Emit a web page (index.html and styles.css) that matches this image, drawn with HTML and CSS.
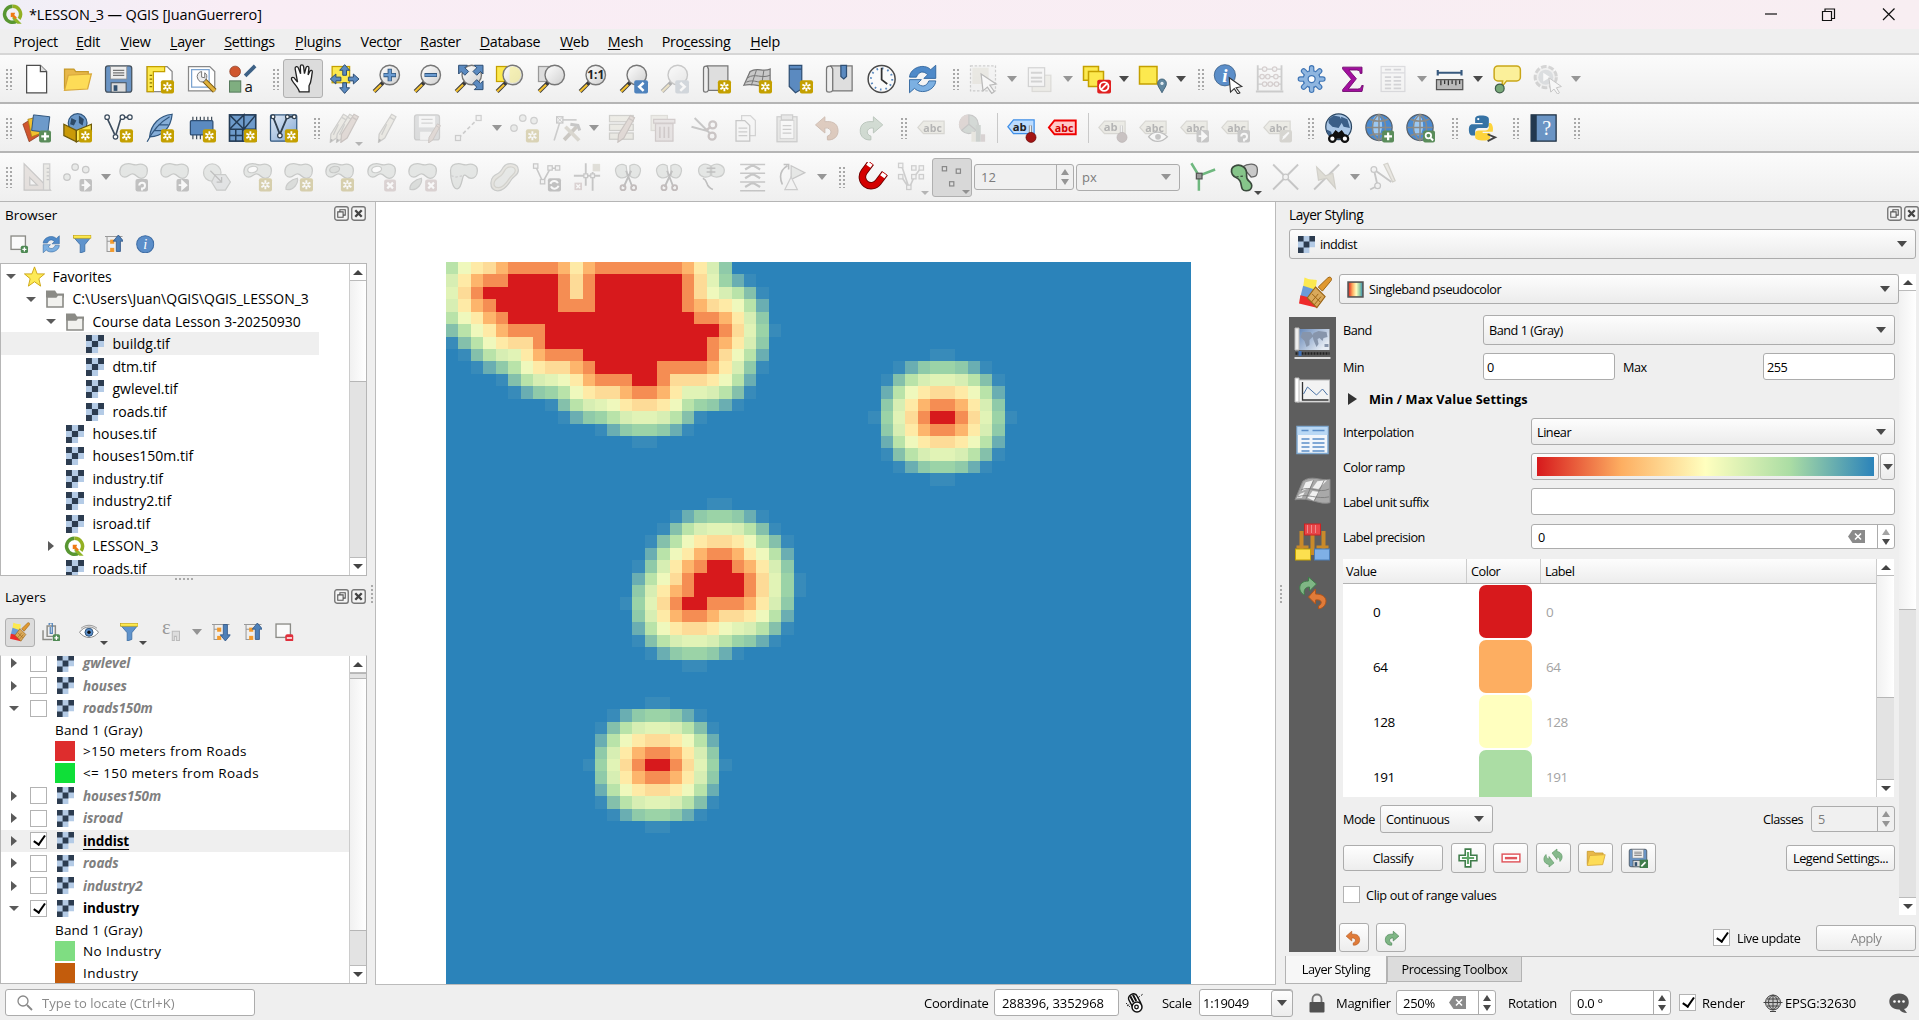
FILE: index.html
```html
<!DOCTYPE html>
<html lang="en">
<head>
<meta charset="utf-8">
<title>*LESSON_3 — QGIS [JuanGuerrero]</title>
<link rel="stylesheet" href="styles.css">
</head>
<body>
<svg class="sprite" aria-hidden="true">
<defs>
<linearGradient id="gl" x1="0" y1="0" x2="1" y2="1"><stop offset="0" stop-color="#fff"/><stop offset="1" stop-color="#cfcfcf"/></linearGradient>
<linearGradient id="spec"><stop offset="0" stop-color="#d7191c"/><stop offset=".3" stop-color="#fdae61"/><stop offset=".55" stop-color="#ffffbf"/><stop offset=".8" stop-color="#8cc7a0"/><stop offset="1" stop-color="#2b83ba"/></linearGradient>
<linearGradient id="sea" x1="0" y1="0" x2="1" y2=".6"><stop offset="0" stop-color="#5f82b4"/><stop offset="1" stop-color="#e6ecf4"/></linearGradient>
<linearGradient id="vg" x1="0" y1="0" x2="1" y2="1"><stop offset="0" stop-color="#e3ebf5"/><stop offset="1" stop-color="#7fa6d3"/></linearGradient>
<g id="bn"><rect x="13" y="13" width="10.5" height="10.5" rx="1.6" fill="#c4a000"/><path d="M18.2 14.6v7.2M15 16.4l6.4 3.7M21.4 16.4L15 20.1" stroke="#fff" stroke-width="1.5"/><circle cx="18.2" cy="18.2" r="1" fill="#c4a000"/></g>
<g id="bp"><rect x="14" y="14" width="9.5" height="9.5" rx="1.6" fill="#5a8c5a"/><path d="M18.8 15.6v6.2M15.7 18.7h6.2" stroke="#fff" stroke-width="1.8"/></g>
<g id="bx"><rect x="14" y="14" width="9.5" height="9.5" rx="1.6" fill="#c9a2a2"/><path d="M16.5 16.5l4.6 4.6M21.1 16.5l-4.6 4.6" stroke="#fff" stroke-width="1.7"/></g>
<g id="ba"><rect x="13.5" y="13.5" width="10" height="10" rx="1.6" fill="#7d7d7d"/><path d="M15.2 18.5h5M18 15.4l3.4 3.1-3.4 3.1z" stroke="#fff" stroke-width="1.5" fill="#fff"/></g>
<g id="br"><rect x="13.5" y="13.5" width="10" height="10" rx="1.6" fill="#7d7d7d"/><path d="M16.500 18.800a2.300 2.300 0 1 1 2.200 2.400v1.600" stroke="#fff" stroke-width="1.600" fill="none"/></g>
<g id="mag"><path d="M9.5 14.5L2 22" stroke="#3a3a3a" stroke-width="3.2"/><path d="M7.6 16.6L2 22" stroke="#f3c130" stroke-width="1.8"/><circle cx="14.5" cy="8.8" r="7.8" fill="url(#gl)" stroke="#777" stroke-width="1.1"/></g>
<g id="blob"><path d="M1 7.500C1 3 4 1.300 8 1.300c3 0 4 1.500 7 .8 4-1 8 .4 8 4.400 0 4.500-2.500 6.500-5 6.500-3.500 0-3.500-3-6.500-3.500-2.500-.5-3.500 2.500-6.500 2.500-2.500 0-4-2-4-4.500z" fill="#c9d2ca" stroke="#858c86"/></g>
<g id="tag"><path d="M5.500 6.500H22v10H5.500L1 11.500z" fill="#ddd9ba" stroke="#a9a68e"/></g>
<g id="pencil"><path d="M16 1l3.500 2L10.500 20l-5 3.500L6 17z" fill="#dcd4b8" stroke="#8d8a80"/><path d="M14.700 3.500l3.500 2M12 9l-4 8.500" fill="none" stroke="#8d8a80"/><path d="M6 20.500l1.700 1-2.200 2z" fill="#555"/></g>
<g id="rpencil"><path d="M16 1l3.500 2L10.500 20l-5 3.500L6 17z" fill="#cfa893" stroke="#8f6f62"/><path d="M14.700 3.500l3.500 2" fill="none" stroke="#8f6f62"/></g>
<g id="globe"><circle cx="11.500" cy="11.500" r="10.500" fill="#4a8ad0" stroke="#58616b"/><ellipse cx="10" cy="10" rx="4" ry="8" fill="#9cc8f2"/><path d="M4 5c4 2 11 2 15 0M1.500 11.500h20M4 18c4-2 11-2 15 0M11.500 1v21M11.500 1c-7 5-7 16 0 21M11.500 1c7 5 7 16 0 21" fill="none" stroke="#8b8a86" stroke-width="1.200"/></g>
</defs>
<symbol id="q" viewBox="0 0 24 24"><path d="M12 2.500a9.200 9.200 0 1 0 5 17" fill="none" stroke="#589632" stroke-width="4"/><path d="M12 2.500a9.200 9.200 0 0 1 7.500 14.500" fill="none" stroke="#93b023" stroke-width="4"/><path d="M12 12l10.500 10.500h-5L12 17z" fill="#8fb52a"/><path d="M10 10h5l-1 2.500 3 3-2 2-3-3-2 .5z" fill="#ee7913"/></symbol>
<symbol id="new" viewBox="0 0 24 24"><path d="M4 1h11l5 5v17H4z" fill="#fff" stroke="#4d4d4d"/><path d="M15 1v5h5" fill="#ddd" stroke="#4d4d4d"/></symbol>
<symbol id="open" viewBox="0 0 24 24"><path d="M1.500 20V4H9l1.500 2h10v3" fill="#e8b84a" stroke="#c69a2b"/><path d="M1.500 21L4.500 9 23 8l-3 12z" fill="#fddc57" stroke="#d9a93b"/></symbol>
<symbol id="save" viewBox="0 0 24 24"><rect x="1.500" y="1.500" width="21" height="21" rx="2" fill="#6a94c4" stroke="#44505c"/><rect x="5.500" y="2" width="13" height="10" fill="#eee" stroke="#8c8c8c" stroke-width=".6"/><path d="M7.500 5h9M7.500 7h9M7.500 9h9" stroke="#777"/><rect x="6" y="15" width="12" height="7.500" fill="#ddd" stroke="#44505c" stroke-width=".8"/><rect x="8" y="17" width="3" height="4.500" fill="#31506f"/></symbol>
<symbol id="layout" viewBox="0 0 24 24"><path d="M2 2h16l4 4v16H2z" fill="#fff" stroke="#888"/><path d="M2 2h14v4H7v16H2z" fill="#fce94f" stroke="#c4a000"/><path d="M4 9h2M4 12h2M4 15h2M4 18h2" stroke="#8a7400"/><use href="#bn"/></symbol>
<symbol id="lmgr" viewBox="0 0 24 24"><path d="M1.500 2h17l4 4v15.500h-21z" fill="#fff" stroke="#888"/><rect x="4" y="4.500" width="14" height="14" fill="none" stroke="#7ba3d0"/><path d="M13.500 12.500l9 9" stroke="#7a5a10" stroke-width="4"/><path d="M14.500 13.500l8 8" stroke="#e0b23c" stroke-width="2.600"/><path d="M12 6a4 4 0 0 0-3 6 4 4 0 0 0 5 2l1.500-2a3.500 3.500 0 0 0-1-5v4l-2.500-.5z" fill="#eee" stroke="#777" stroke-width=".8"/></symbol>
<symbol id="style" viewBox="0 0 24 24"><circle cx="6" cy="6" r="4.300" fill="#d0562e" stroke="#8a3a20" stroke-width=".6"/><path d="M14 9.500l8-8" stroke="#3d6186" stroke-width="3"/><rect x="1.500" y="13.500" width="9" height="9" fill="#7fae80" stroke="#55795b" stroke-width=".8"/><text x="13.500" y="22" font-size="12" font-family="Open Sans" fill="#111">a</text></symbol>
<symbol id="hand" viewBox="0 0 24 24"><path d="M9 23c-1-4-6-8-6.500-10.500-.2-2 2-1.800 3 0l2 2.500L5.500 4c-.3-2 2-2.500 2.700-.6L10 8 9.800 2.200c0-2 2.400-2 2.700 0L13.200 8l1.300-5c.6-1.700 2.500-1.200 2.400.4L16.200 9l1.500-3c.8-1.400 2.300-.6 2 .8-1 5-.6 8-2.700 11.200V23z" fill="#fff" stroke="#222" stroke-width="1.100"/></symbol>
<symbol id="pan" viewBox="0 0 24 24"><rect x="2" y="2" width="14" height="13" fill="#fce94f" stroke="#c4a000"/><g fill="#5b8ac0" stroke="#2f4f74" stroke-width=".8"><path d="M12 .5l4 4.500h-2.500v4h-3V5H8zM12 23.500L8 19h2.500v-4h3v4H16zM.5 12L5 8v2.500h4v3H5V16zM23.500 12L19 16v-2.500h-4v-3h4V8z"/></g></symbol>
<symbol id="zin" viewBox="0 0 24 24"><use href="#mag"/><path d="M14.500 3.800v10M9.500 8.800h10" stroke="#31577f" stroke-width="3.400"/><path d="M14.500 4.300v9M10 8.800h9" stroke="#6a9bd1" stroke-width="2"/></symbol>
<symbol id="zout" viewBox="0 0 24 24"><use href="#mag"/><path d="M9.500 8.800h10" stroke="#31577f" stroke-width="3.200"/><path d="M10 8.800h9" stroke="#6a9bd1" stroke-width="1.800"/></symbol>
<symbol id="zfull" viewBox="0 0 24 24"><use href="#mag"/><g fill="#5b8ac0" stroke="#2f4f74" stroke-width=".8"><path d="M4 1h7L9 3l3 3-3 3-3-3-2 2zM23.500 1h-7l2 2-3 3 3 3 3-3 2 2zM23.500 20.500h-7l2-2-3-3 3-3 3 3 2-2z"/></g></symbol>
<symbol id="zsel" viewBox="0 0 24 24"><rect x="1.500" y="2" width="10" height="12" fill="#fce94f" stroke="#c4a000"/><use href="#mag"/><path d="M12 2.500v12a6.500 6.500 0 1 0 0-12z" fill="#f7ef9e" opacity=".7"/></symbol>
<symbol id="zlay" viewBox="0 0 24 24"><rect x="1.500" y="2" width="10" height="12" fill="#ddd" stroke="#999"/><use href="#mag"/></symbol>
<symbol id="z11" viewBox="0 0 24 24"><use href="#mag"/><text x="14.500" y="12.200" font-size="9.500" font-weight="700" text-anchor="middle" font-family="Open Sans" fill="#222">1:1</text></symbol>
<symbol id="zlast" viewBox="0 0 24 24"><use href="#mag"/><rect x="12.500" y="13" width="11" height="10.500" rx="1.500" fill="#4f83bd"/><path d="M20 15l-3.500 3.200L20 21.500" fill="none" stroke="#fff" stroke-width="2"/></symbol>
<symbol id="znext" viewBox="0 0 24 24"><use href="#mag"/><rect x="12.500" y="13" width="11" height="10.500" rx="1.500" fill="#8ea7c2"/><path d="M16.500 15l3.500 3.200-3.500 3.300" fill="none" stroke="#fff" stroke-width="2"/></symbol>
<symbol id="nmap" viewBox="0 0 24 24"><path d="M1.500 4c0-3 4-3 4 0v17c-1 2-4 2-4 0z" fill="#eee" stroke="#777"/><path d="M4.500 1.500H21V21H5.500V4z" fill="#dedede" stroke="#777"/><use href="#bn"/></symbol>
<symbol id="n3d" viewBox="0 0 24 24"><path d="M6 6c6-4 10 1 16-2v14c-7 1-13-3-21-1z" fill="#c9c9c9" stroke="#777"/><path d="M4 11c6-4 11 1 18-2M3 14.500c6-3 11 2 19 0M11 5L7 17M17 5l-2 13" stroke="#777" fill="none" stroke-width=".8"/><use href="#bn"/></symbol>
<symbol id="nbook" viewBox="0 0 24 24"><path d="M4.500 1h10v19l-5 3-5-5z" fill="#5b8ac0" stroke="#2f4f74"/><path d="M4.500 4h10" stroke="#2f4f74"/><use href="#bn"/></symbol>
<symbol id="books" viewBox="0 0 24 24"><path d="M1.500 4c0-3 5-3 5 0v17c-1 2-5 2-5 0z" fill="#eee" stroke="#777"/><path d="M5 1.500H22v20H6.500V4z" fill="#dedede" stroke="#777"/><path d="M13 1h4.500v9l-2.200 2-2.300-2z" fill="#5b8ac0" stroke="#2f4f74"/></symbol>
<symbol id="clock" viewBox="0 0 24 24"><circle cx="12" cy="12" r="10.800" fill="#fafafa" stroke="#4a4a4a" stroke-width="1.200"/><circle cx="12" cy="12" r="8.500" fill="none" stroke="#5b8ac0" stroke-width="1.600" stroke-dasharray="1.300 3.150"/><path d="M12 3v9.500l4.500 3.500" fill="none" stroke="#333" stroke-width="1.400"/></symbol>
<symbol id="refresh" viewBox="0 0 24 24"><path d="M1.500 10.500C2 3 13-1 18.500 4.500L22.500 1v10.500H13l3-3c-3-3-7-3-9 2z" fill="#4f8ac9" stroke="#2d629c" stroke-width=".7"/><path d="M22.500 13.500C22 21 11 25 5.500 19.500L1.500 23V12.500H11l-3 3c3 3 7 3 9-2z" fill="#7cb0e2" stroke="#2d629c" stroke-width=".7"/></symbol>
<symbol id="select" viewBox="0 0 24 24"><rect x="1.500" y="1.500" width="20" height="20" fill="#ededed" stroke="#888" stroke-dasharray="2 1.300"/><rect x="3" y="3" width="13" height="13" fill="#d6d0b4"/><path d="M10 8l12 8-5 1 3.500 5-2 1.500-3.500-5-3.500 3z" fill="#fff" stroke="#555"/></symbol>
<symbol id="form" viewBox="0 0 24 24"><rect x="6" y="9" width="15" height="13" fill="#e4dfc8" stroke="#b5b1a0"/><rect x="3" y="3" width="13" height="15" fill="#f4f4f4" stroke="#999"/><path d="M5 7h9M5 11h9M5 14h9" stroke="#999" stroke-width="1.500"/></symbol>
<symbol id="desel" viewBox="0 0 24 24"><g fill="#fce94f" stroke="#c4a000" stroke-width="1.200"><rect x="1.500" y="2" width="12" height="11"/><rect x="5.500" y="6" width="12" height="12"/></g><rect x="12.500" y="12.500" width="11" height="11" rx="1.500" fill="#e02020"/><circle cx="18" cy="18" r="3.500" fill="none" stroke="#fff" stroke-width="1.500"/><path d="M15.500 20.500l5-5" stroke="#fff" stroke-width="1.500"/></symbol>
<symbol id="selloc" viewBox="0 0 24 24"><rect x="1.500" y="2" width="14" height="14" fill="#fce94f" stroke="#c4a000" stroke-width="1.200"/><path d="M19.500 23c-2-4-3.500-5-3.500-7.500a3.500 3.500 0 0 1 7 0c0 2.500-1.500 3.500-3.500 7.500z" fill="#61879f" stroke="#3d5f76" stroke-width=".7"/><circle cx="19.500" cy="15.500" r="1.300" fill="#dfe9ef"/></symbol>
<symbol id="ident" viewBox="0 0 24 24"><circle cx="9" cy="9" r="8.500" fill="#5b8ec9" stroke="#31577f" stroke-width=".6"/><text x="9" y="14.500" font-size="15" font-style="italic" font-weight="700" text-anchor="middle" font-family="Liberation Serif" fill="#fff">i</text><path d="M12.500 11l10 7-4.500 1 3 4-1.600 1-2.900-4.300-3 2.800z" fill="#fff" stroke="#333" stroke-width=".9"/></symbol>
<symbol id="abacus" viewBox="0 0 24 24"><path d="M2.500 1v20M21.500 1v20M1 22h22" stroke="#888" stroke-width="1.500"/><path d="M2.500 4h19M2.500 10h19M2.500 16h19" stroke="#888"/><g fill="#eee" stroke="#b08a8a"><circle cx="8" cy="4" r="1.800"/><circle cx="16" cy="4" r="1.800"/><circle cx="6" cy="10" r="1.800"/><circle cx="10.500" cy="10" r="1.800"/><circle cx="17" cy="10" r="1.800"/><circle cx="8" cy="16" r="1.800"/><circle cx="12.500" cy="16" r="1.800"/><circle cx="17.500" cy="16" r="1.800"/></g></symbol>
<symbol id="gear" viewBox="0 0 24 24"><g stroke="#3f75b5" stroke-width="4.400" stroke-linecap="round"><path d="M12 3v18M3 12h18M5.600 5.600l12.800 12.800M18.400 5.600L5.600 18.400"/></g><circle cx="12" cy="12" r="6.800" fill="#8fb6e0" stroke="#3f75b5"/><g stroke="#8fb6e0" stroke-width="2.600" stroke-linecap="round"><path d="M12 3v18M3 12h18M5.600 5.600l12.800 12.800M18.400 5.600L5.600 18.400"/></g><circle cx="12" cy="12" r="2.800" fill="#fff" stroke="#3f75b5"/></symbol>
<symbol id="sigma" viewBox="0 0 24 24"><path d="M4 2.500h15.500v5H18c0-2-1-2.700-3-2.700H9l6 7L8.500 20H16c2 0 2.800-.8 3.300-2.800h1.200L19.500 22H4v-1.500l7-8.300-7-8.200z" fill="#a20f9f" stroke="#6f0a6d" stroke-width=".7"/></symbol>
<symbol id="table" viewBox="0 0 24 24"><rect x="2" y="2" width="19" height="20" fill="#f4f4f4" stroke="#aab"/><path d="M2 7h19" stroke="#aab"/><path d="M5 4.500h5M12 4.500h6M5 10.500h5M12 10.500h6M5 13.500h5M12 13.500h6M5 16.500h5M12 16.500h6M5 19.500h5M12 19.500h6" stroke="#99a" stroke-width="1.300"/></symbol>
<symbol id="ruler" viewBox="0 0 24 24"><path d="M2.500 7h19M2.500 4.800v4.400M21.500 4.800v4.400" stroke="#37597e" stroke-width="1.700"/><rect x="1.500" y="12.500" width="21" height="8" fill="#b9b9b9" stroke="#555"/><path d="M5 13v4M8 13v3M11 13v4M14 13v3M17 13v4M20 13v3" stroke="#333"/></symbol>
<symbol id="tip" viewBox="0 0 24 24"><path d="M5 1.500h15a3 3 0 0 1 3 3v6a3 3 0 0 1-3 3h-8l-4 5 .8-5H5a3 3 0 0 1-3-3v-6a3 3 0 0 1 3-3z" fill="#fbf09a" stroke="#c9a618" stroke-width="1.200"/><circle cx="6.500" cy="19.500" r="3.500" fill="#77a878" stroke="#3e5c48"/></symbol>
<symbol id="act" viewBox="0 0 24 24"><circle cx="10.500" cy="10.500" r="8.500" fill="#e4e4e4" stroke="#999" stroke-width="2.400" stroke-dasharray="4.500 1.500"/><circle cx="10.500" cy="10.500" r="6" fill="#a9b5c0"/><path d="M8.500 7v7l5.500-3.500z" fill="#fff"/><path d="M13 11l10 7-4 1 2.500 4-1.600 1-2.900-4-2.500 2.500z" fill="#fff" stroke="#777" stroke-width=".8"/></symbol>
<symbol id="dsm" viewBox="0 0 24 24"><path d="M1 9l8-5 5 14-8 5z" fill="#d0562e" stroke="#8a3a20" stroke-width=".6"/><path d="M5 5l9-2 2 13-8 3z" fill="#f2c12e" stroke="#a37e13" stroke-width=".6"/><path d="M9.500 1.500l13 1.500-1.500 12.500-13-1.500z" fill="#6d9aca" stroke="#31577f" stroke-width=".8"/><use href="#bp"/></symbol>
<symbol id="gpkg" viewBox="0 0 24 24"><circle cx="12" cy="8" r="7.500" fill="#6d9aca" stroke="#31577f"/><path d="M7 4l4 2-2 4-3-1zM13 2l4 3-1 5-3-2z" fill="#2d4a68"/><path d="M1 9l10 5v9L1 18z" fill="#c99a08" stroke="#6e5a0a"/><path d="M23 9l-12 5v9l12-5z" fill="#fce94f" stroke="#6e5a0a"/><use href="#bn"/></symbol>
<symbol id="shp" viewBox="0 0 24 24"><path d="M2.500 3.500l7 15L14 3.500h8" fill="none" stroke="#3d4d5e" stroke-width="1.300"/><g fill="#fff" stroke="#3d4d5e"><circle cx="2.800" cy="3.300" r="1.800"/><circle cx="9.500" cy="19" r="1.800"/><circle cx="15" cy="3.300" r="1.800"/><circle cx="21" cy="3.300" r="1.800"/></g><use href="#bn"/></symbol>
<symbol id="feather" viewBox="0 0 24 24"><path d="M22 1C12 2 5 9 4 19c10 0 17-7 18-18z" fill="#86aed8" stroke="#31577f"/><path d="M2 23C6 15 13 7 20 3M8 14h8M11 9.500h8" fill="none" stroke="#31577f"/><use href="#bn"/></symbol>
<symbol id="chip" viewBox="0 0 24 24"><path d="M5 3v18M8 3v18M11 3v18M14 3v18M17 3v18M20 3v18" stroke="#44505c"/><rect x="3" y="6" width="18" height="11.500" rx="1" fill="#5b8ac0" stroke="#2f4f74"/><use href="#bn"/></symbol>
<symbol id="mesh" viewBox="0 0 24 24"><rect x="1.500" y="1.500" width="21" height="21" fill="#6d9aca" stroke="#233b55" stroke-width="1.300"/><path d="M1.500 13h21M13 13L1.500 1.500M1.500 13L13 1.500V13L22.500 1.500M1.500 18h10M6.500 13v9.500M12 13v9.500" fill="none" stroke="#233b55" stroke-width="1.200"/><use href="#bn"/></symbol>
<symbol id="virt" viewBox="0 0 24 24"><rect x="1.500" y="1.500" width="21" height="21" rx="1" fill="url(#vg)" stroke="#31577f"/><path d="M3.500 3l5.500 14L15 3h6" fill="none" stroke="#31404f" stroke-width="1.500"/><g fill="#fff" stroke="#31404f"><circle cx="3.500" cy="3" r="1.500"/><circle cx="9" cy="18" r="1.800"/><circle cx="15" cy="3" r="1.500"/><circle cx="20.500" cy="3" r="1.500"/></g><use href="#bn"/></symbol>
<symbol id="pen3" viewBox="0 0 24 24"><g transform="translate(-5 0)"><use href="#pencil"/></g><use href="#pencil"/><g transform="translate(3.500 0)"><use href="#rpencil"/></g></symbol>
<symbol id="pen" viewBox="0 0 24 24"><use href="#pencil"/></symbol>
<symbol id="savee" viewBox="0 0 24 24"><rect x="1.500" y="1.500" width="20" height="20" rx="2" fill="#b0b4b8" stroke="#888"/><rect x="5" y="2.500" width="13" height="9" fill="#f4f4f4"/><path d="M7 5h9M7 8h9" stroke="#999"/><rect x="6" y="15" width="9" height="6.500" fill="#f0f0f0"/><g transform="translate(9 8) scale(.68)"><use href="#rpencil"/></g></symbol>
<symbol id="line" viewBox="0 0 24 24"><path d="M4 20L20 4" stroke="#888" stroke-width="1.300" stroke-dasharray="3 2"/><g fill="#eee" stroke="#888"><rect x="1.500" y="18" width="4" height="4"/><rect x="18" y="2" width="4" height="4"/></g></symbol>
<symbol id="pts" viewBox="0 0 24 24"><g fill="#d4dad4" stroke="#888"><circle cx="10.500" cy="4" r="2.600"/><circle cx="19.500" cy="6" r="2.600"/><circle cx="3.500" cy="12" r="2.600"/></g><use href="#bn"/></symbol>
<symbol id="ptsm" viewBox="0 0 24 24"><g fill="#d4dad4" stroke="#888"><circle cx="10" cy="4" r="2.600"/><circle cx="18.500" cy="6" r="2.600"/><circle cx="3.500" cy="12" r="2.600"/></g><use href="#ba"/></symbol>
<symbol id="node" viewBox="0 0 24 24"><path d="M7 6L2 22M8 5.500h12" stroke="#888" stroke-width="1.300"/><rect x="4" y="3" width="5" height="5" fill="#eee" stroke="#777"/><path d="M4 3l5 5M9 3L4 8" stroke="#777" stroke-width=".7"/><path d="M10 21.500L20 11" stroke="#8d7d62" stroke-width="3"/><path d="M11 11l11 11" stroke="#b3a57f" stroke-width="3"/><path d="M15 9l6 1 1.500 4" fill="none" stroke="#777" stroke-width="2.500"/></symbol>
<symbol id="rows" viewBox="0 0 24 24"><g fill="#ddd8ba" stroke="#8e8b7c"><rect x="1.500" y="2" width="19" height="5"/><rect x="1.500" y="9" width="19" height="5"/><rect x="1.500" y="16" width="19" height="5"/></g><g transform="translate(3 1) scale(.95)"><use href="#rpencil"/></g></symbol>
<symbol id="trash" viewBox="0 0 24 24"><rect x="2" y="2" width="13" height="12" fill="#ddd8c0" stroke="#b5b09a"/><path d="M4 5h17v3H4zM5.500 8.500h14v14h-14z" fill="#d7c3c3" stroke="#a07f7f"/><path d="M9 11v9M12.500 11v9M16 11v9" stroke="#a07f7f" stroke-width="1.300"/></symbol>
<symbol id="cut" viewBox="0 0 24 24"><path d="M1.500 11l13 3.500M4 4l12 12" stroke="#777" stroke-width="1.600"/><g fill="none" stroke="#8d7070" stroke-width="1.800"><circle cx="18.500" cy="9.500" r="2.800"/><circle cx="18" cy="18.500" r="2.800"/></g><path d="M13 14l4-3" stroke="#8d7070" stroke-width="1.800"/></symbol>
<symbol id="copy" viewBox="0 0 24 24"><path d="M8 2h7l4 4v12H8z" fill="#f5f5f5" stroke="#999"/><path d="M3.500 6h7l4 4v12.500h-11z" fill="#f5f5f5" stroke="#777"/><path d="M5.500 12h7M5.500 15h7M5.500 18h7" stroke="#888"/></symbol>
<symbol id="paste" viewBox="0 0 24 24"><rect x="3.500" y="3" width="16" height="20" fill="#d2d2cc" stroke="#888"/><rect x="6" y="6" width="11" height="14.500" fill="#fafafa" stroke="#999" stroke-width=".7"/><rect x="7" y="1.500" width="9" height="4" fill="#ccc" stroke="#888"/><path d="M8 10h7M8 13h7M8 16h7" stroke="#888"/></symbol>
<symbol id="undo" viewBox="0 0 24 24"><path d="M9 3L1.500 9.500 9 16v-4c5-1 7 5 2 6.500v3c4 .5 9-2 8.500-8S14 6.500 9 7z" fill="#e07b39" stroke="#b0551c" stroke-width=".8"/></symbol>
<symbol id="redo" viewBox="0 0 24 24"><path d="M15 3l7.500 6.500L15 16v-4c-5-1-7 5-2 6.500v3c-4 .5-9-2-8.500-8S10 6.500 15 7z" fill="#7fb685" stroke="#3f7c4a" stroke-width=".8"/></symbol>
<symbol id="abc" viewBox="0 0 24 24"><use href="#tag"/><text x="12.800" y="14.800" font-size="8.500" font-weight="700" text-anchor="middle" font-family="Open Sans" fill="#444">abc</text></symbol>
<symbol id="pie" viewBox="0 0 24 24"><circle cx="9" cy="9" r="7.500" fill="#8fab98" stroke="#777"/><path d="M9 9V1.500A7.500 7.500 0 0 0 3 14z" fill="#c59a90"/><path d="M9 9l-6 5M9 9V1.500M9 9l6 5" stroke="#777"/><path d="M11 15h3.500v8H11z" fill="#d6cfae"/><path d="M14.500 9.500h4V23h-4z" fill="#7f9c8b"/><path d="M18.500 17H22v6h-3.500z" fill="#b99696"/></symbol>
<symbol id="abpin" viewBox="0 0 24 24"><path d="M5.500 5.500H22v11H5.500L1 11z" fill="#bcdcff" stroke="#3f8fe8"/><text x="10.500" y="14.500" font-size="9" font-weight="700" text-anchor="middle" font-family="Open Sans" fill="#222">ab</text><path d="M19 10v9" stroke="#777" stroke-width="2.400"/><path d="M19 10v9" stroke="#eee" stroke-width="1.200"/><circle cx="19.500" cy="19.500" r="4" fill="#a31515" stroke="#6e0c0c" stroke-width=".6"/></symbol>
<symbol id="abpin2" viewBox="0 0 24 24"><use href="#tag"/><text x="10.500" y="14.500" font-size="9" font-weight="700" text-anchor="middle" font-family="Open Sans" fill="#444">ab</text><path d="M19 10v9" stroke="#777" stroke-width="2.400"/><path d="M19 10v9" stroke="#eee" stroke-width="1.200"/><circle cx="19.500" cy="19.500" r="4" fill="#8f6a6a" stroke="#6e4c4c" stroke-width=".6"/></symbol>
<symbol id="abred" viewBox="0 0 24 24"><path d="M5.500 6H22.500v11H5.500L1 11.500z" fill="#ffc9c9" stroke="#f00000" stroke-width="1.500"/><text x="13.200" y="14.800" font-size="8.500" font-weight="700" text-anchor="middle" font-family="Open Sans" fill="#d00000">abc</text></symbol>
<symbol id="abeye" viewBox="0 0 24 24"><use href="#abc"/><path d="M8 19c4-5 10-5 15 0-5 5-11 5-15 0z" fill="#fff" stroke="#666"/><circle cx="15.500" cy="19" r="2.300" fill="#777"/></symbol>
<symbol id="abmove" viewBox="0 0 24 24"><use href="#abc"/><use href="#ba"/></symbol>
<symbol id="abrot" viewBox="0 0 24 24"><use href="#abc"/><use href="#br"/></symbol>
<symbol id="abed" viewBox="0 0 24 24"><use href="#abc"/><rect x="13.500" y="13.500" width="10" height="10" rx="1.600" fill="#a8a28a"/><path d="M15.500 21.500l1-3 4-3.500 1 1-3.500 4z" fill="#fff"/></symbol>
<symbol id="meta" viewBox="0 0 24 24"><circle cx="12" cy="11" r="10.300" fill="#a9c6e6" stroke="#2b4763"/><path d="M4 5l4-3 5 1 2 4-3 5-5-1-3-3zM14 3l5 2 2 7-5-1-2-4zM2 13l4 2 1 4-3-1z" fill="#3b5f88"/><path d="M9.500 13.500l-5 7h15l-5-7-2.500 2z" fill="#111"/><g fill="#fff" stroke="#111" stroke-width="1.800"><circle cx="7" cy="20.500" r="2.600"/><circle cx="17" cy="20.500" r="2.600"/></g></symbol>
<symbol id="gadd" viewBox="0 0 24 24"><use href="#globe"/><use href="#bp"/></symbol>
<symbol id="gsea" viewBox="0 0 24 24"><use href="#globe"/><rect x="14" y="14" width="9.500" height="9.500" rx="1.600" fill="#5a8c5a"/><circle cx="18.200" cy="18" r="2.200" fill="none" stroke="#fff" stroke-width="1.400"/><path d="M20 20l2 2" stroke="#fff" stroke-width="1.500"/></symbol>
<symbol id="py" viewBox="0 0 24 24"><path d="M11 2c-4 0-5 1-5 3v3h6v1H4c-2.500 0-3 2-3 4.500S2 18 4 18h2v-3c0-2 1-3 3-3h5c2 0 3-1 3-2.500V5c0-2-2-3-6-3z" fill="#3673a5"/><path d="M13 22c4 0 5-1 5-3v-3h-6v-1h8c1-3-.5-7-2-7h-1v3c0 2-1 3-3 3H9c-2 0-3 1-3 2.500V19c0 2 2 3 7 3z" fill="#fdd43c"/><circle cx="8.500" cy="4.800" r=".9" fill="#fff"/><path d="M16 17l6 2.500-6 3" fill="none" stroke="#444" stroke-width="1.500"/></symbol>
<symbol id="help" viewBox="0 0 24 24"><rect x="2" y="1.500" width="20" height="21" fill="#6a94c4" stroke="#1d2e40"/><rect x="2" y="1.500" width="4.500" height="21" fill="#22384f"/><text x="14.500" y="17.500" font-size="16" text-anchor="middle" font-family="Liberation Serif" fill="#fff">?</text></symbol>
<symbol id="tri" viewBox="0 0 24 24"><path d="M2 1.500v21h21zM6.500 12.500l6 6h-6z" fill="#d9c3b8" fill-rule="evenodd" stroke="#8f8a86"/><path d="M17.500 1.500h5v21h-5z" fill="#dcd8c8" stroke="#999"/><path d="M20 5h2M20 8h2M20 11h2M20 14h2" stroke="#888"/></symbol>
<symbol id="b1" viewBox="0 0 24 24"><use href="#blob"/><use href="#br"/></symbol>
<symbol id="b2" viewBox="0 0 24 24"><use href="#blob"/><use href="#ba"/></symbol>
<symbol id="b3" viewBox="0 0 24 24"><circle cx="8.500" cy="8.500" r="7" fill="#c9d2ca" stroke="#8f9690"/><path d="M11 10h8l4 6-4 6.500h-7L8 16z" fill="#c9cfd2" stroke="#8f9690"/><path d="M7 7l9 9M16 12v4h-4" stroke="#777" fill="none"/></symbol>
<symbol id="b4" viewBox="0 0 24 24"><use href="#blob"/><ellipse cx="8" cy="6" rx="4" ry="2.500" transform="rotate(-12 8 6)" fill="#fff" stroke="#8f9690"/><use href="#bn"/></symbol>
<symbol id="b5" viewBox="0 0 24 24"><use href="#blob"/><path d="M2 22c-1-4 4-8 9-9 1 4-3 10-9 9z" fill="#b6bfb7" stroke="#8f9690"/><use href="#bn"/></symbol>
<symbol id="b6" viewBox="0 0 24 24"><use href="#blob"/><ellipse cx="8" cy="6" rx="4" ry="2.500" transform="rotate(-12 8 6)" fill="#b5c0b6" stroke="#858c86"/><use href="#bn"/></symbol>
<symbol id="b7" viewBox="0 0 24 24"><use href="#blob"/><ellipse cx="8" cy="6" rx="4" ry="2.500" transform="rotate(-12 8 6)" fill="#fff" stroke="#8f9690"/><use href="#bx"/></symbol>
<symbol id="b8" viewBox="0 0 24 24"><use href="#blob"/><path d="M2 22c-1-4 4-8 9-9 1 4-3 10-9 9z" fill="#b6bfb7" stroke="#8f9690"/><use href="#bx"/></symbol>
<symbol id="b9" viewBox="0 0 24 24"><path d="M1.500 7C1.500 3 4 1.300 8 1.300c3 0 4 1.500 7 .8 4-1 8 .4 8 4.400 0 4.500-2.500 6.500-5 6.500-3.500 0-3.500-3-5.500-2.500S11 21 7 21.500 1.500 12 1.500 7z" fill="#c9d2ca" stroke="#858c86"/><path d="M2 11l4 1 5-1" fill="none" stroke="#999" stroke-dasharray="2 1.500"/></symbol>
<symbol id="b10" viewBox="0 0 24 24"><path d="M11 4c3-4 12-3.500 12 2.500 0 4-3.500 4.500-5.500 7.500-3 5-6 9-11 9-4 0-5.500-3-5.500-6C1 12 4 10.500 7 9c2-1 3-3.500 4-5z" fill="#d3cdb8" stroke="#8f9690"/><path d="M13 5.500c2.500-2.500 7.500-2 7.500 1.500 0 2.500-3 3.500-5 6.500-2.500 4-5 7-8.500 7S3 18 4 15.500s3-3 5-4.500 3-4.500 4-5.500z" fill="#cfd7cf" stroke="#a9a68e"/></symbol>
<symbol id="b11" viewBox="0 0 24 24"><path d="M3 3l6 13L15 5h6" fill="none" stroke="#888" stroke-width="1.300"/><g fill="#eee" stroke="#888"><rect x="1.500" y="1.500" width="3.500" height="3.500"/><rect x="7" y="14" width="3.500" height="3.500"/><rect x="13" y="3" width="3.500" height="3.500"/><rect x="19" y="3" width="3.500" height="3.500"/></g><rect x="13" y="13" width="10.500" height="10.500" rx="1.600" fill="#7d7d7d"/><path d="M15 17.500c1-3 5-3 6-.5M21.500 19c-1 3-5 3-6 .5" fill="none" stroke="#fff" stroke-width="1.600"/></symbol>
<symbol id="b12" viewBox="0 0 24 24"><path d="M10.500 1v18M16 8v15M1 11h21" stroke="#888" stroke-width="1.500"/><g fill="#eee" stroke="#888"><rect x="9" y="9.500" width="3" height="3"/><rect x="14.500" y="9.500" width="3" height="3"/></g><rect x="1.500" y="16.500" width="6" height="6" fill="#c9a2a2"/><path d="M3 18l3 3M6 18l-3 3" stroke="#fff"/><rect x="16" y="1.500" width="6" height="6" fill="#c4bfa0"/></symbol>
<symbol id="b13" viewBox="0 0 24 24"><g fill="#c9d2ca" stroke="#8f9690"><path d="M10 3C5 0 0 4 2 9c1 4 6 5 9 2zM13 3c5-3 10 1 8 6-1 4-5 5-8 2z"/></g><path d="M8 20l6-13M15 20L10 7" stroke="#777" stroke-width="1.500"/><circle cx="7.500" cy="20.500" r="2" fill="none" stroke="#8d7070" stroke-width="1.500"/><circle cx="16" cy="20.500" r="2" fill="none" stroke="#8d7070" stroke-width="1.500"/></symbol>
<symbol id="b14" viewBox="0 0 24 24"><g fill="#c9d2ca" stroke="#8f9690"><path d="M11 3C6 0 0 3 2 9c1 3 6 4 9 2zM12 3c5-3 11 0 10 5-1 4-6 5-10 3z"/></g><path d="M8 5h7M8 8h7M5 13c5 2 1 6 8 9" fill="none" stroke="#777" stroke-width="1.300"/></symbol>
<symbol id="b15" viewBox="0 0 24 24"><g fill="none" stroke="#888" stroke-width="1.300"><path d="M2 2h20M2 9h20M2 16h20M2 23h20"/><path d="M6 6l5-3 2 0 5 3M6 13l5-3 2 0 5 3M6 20l5-3 2 0 5 3" stroke-width="1.800"/></g></symbol>
<symbol id="b16" viewBox="0 0 24 24"><path d="M10 3v11l11-5.500z" fill="#cfd5cf" stroke="#888"/><path d="M10 12l5 10H5z" fill="#f3f3f3" stroke="#999"/><path d="M3 18C0 11 2 6 7 3M4 2h4v4" fill="none" stroke="#777" stroke-width="1.300"/></symbol>
<symbol id="magnet" viewBox="0 0 24 24"><g transform="rotate(-38 12 12) translate(0 1)" fill="none"><path d="M5 3v9a7 7 0 0 0 14 0V3" stroke="#6b0000" stroke-width="6" transform="rotate(75 12 12) translate(0 -1)"/><path d="M5 3v9a7 7 0 0 0 14 0V3" stroke="#d40000" stroke-width="4.600" transform="rotate(75 12 12) translate(0 -1)"/><path d="M5 3.500v3M19 3.500v3" stroke="#fff" stroke-width="4.200" transform="rotate(75 12 12) translate(0 -1)"/></g></symbol>
<symbol id="verts" viewBox="0 0 24 24"><path d="M4 3l6 18L14 12l6-8M4 12l6 9" fill="none" stroke="#888" stroke-width="1.300"/><g fill="#eee" stroke="#888"><rect x="1.500" y="1" width="3.500" height="3.500"/><rect x="1.500" y="10" width="3.500" height="3.500"/><rect x="12" y="3" width="3.500" height="3.500"/><rect x="18" y="3" width="3.500" height="3.500"/><rect x="12" y="10" width="3.500" height="3.500"/><rect x="18" y="10" width="3.500" height="3.500"/><rect x="8" y="18.500" width="3.500" height="3.500"/></g></symbol>
<symbol id="snap" viewBox="0 0 24 24"><g fill="#ddd" stroke="#888"><rect x="4" y="3" width="3.500" height="3.500"/><rect x="15.500" y="5" width="3.500" height="3.500"/><rect x="10" y="15.500" width="3.500" height="3.500"/></g></symbol>
<symbol id="topo" viewBox="0 0 24 24"><path d="M3 1l6 10L22 6M9 11v12" fill="none" stroke="#6fb87f" stroke-width="2"/><rect x="7" y="9" width="4.500" height="4.500" fill="#999" stroke="#555"/></symbol>
<symbol id="self" viewBox="0 0 24 24"><path d="M11 4c4-3 12-4 12 2s-2 6-5 6z" fill="#c9c9c9" stroke="#666"/><path d="M3 10C0 3 8 1 12 4c5 4 0 8 4 11s3 8-2 8-3-5-5-8-4-2-6-5z" fill="#86c58a" stroke="#3a4a3c" stroke-width="1.300"/><path d="M6 12l7-1" stroke="#3a4a3c" stroke-dasharray="2 1.500"/></symbol>
<symbol id="xx" viewBox="0 0 24 24"><path d="M2 2l20 20M22 2L2 22" stroke="#888" stroke-width="1.500"/><circle cx="12" cy="12" r="2.300" fill="#eee" stroke="#888"/></symbol>
<symbol id="bolt" viewBox="0 0 24 24"><path d="M22 2L2 22" stroke="#888" stroke-width="1.500"/><path d="M4 4l1.500 10.500L12 13l7 8-2-12-6 2z" fill="#c4bb98" stroke="#a59d80"/></symbol>
<symbol id="trace" viewBox="0 0 24 24"><path d="M2 22l6-3-3-13 14 10" fill="none" stroke="#888" stroke-width="1.500"/><circle cx="5" cy="6" r="2.300" fill="#eee" stroke="#888"/><circle cx="8" cy="19" r="2.300" fill="#eee" stroke="#888"/><path d="M13 2l3-1 6 14-2 1z" fill="#ddd4bd" stroke="#a59d80"/></symbol>
<symbol id="tif" viewBox="0 0 17 17"><path d="M0 0h17v11.300h-5.600V17H0z" fill="#b4cbe6"/><path d="M0 0h5.600v5.600H0zM11.400 0H17v5.600h-5.600zM5.600 5.600h5.800v5.800H5.600zM0 11.400h5.600V17H0z" fill="#2c3c50"/></symbol>
<symbol id="star" viewBox="0 0 24 24"><path d="M12 1l3 8h8.500L17 14.500 19 23l-7-5-7 5 2-8.500L.5 9H9z" fill="#fdea57" stroke="#c9a00c"/></symbol>
<symbol id="fold" viewBox="0 0 18 18"><path d="M0 .5h9l2 3H18v4H0z" fill="#8b8b86"/><path d="M1 7h9l1.500-2H17v12H1z" fill="#f1f1ee" stroke="#8b8b86" stroke-width="1.600"/></symbol>
<symbol id="addl" viewBox="0 0 18 18"><rect x="1" y="1" width="14" height="13" fill="#fafafa" stroke="#8b8b86" stroke-width="1.300"/><rect x="10.500" y="10.500" width="7" height="7" rx="1.500" fill="#4f8a54"/><path d="M14 12v4M12 14h4" stroke="#fff" stroke-width="1.300"/></symbol>
<symbol id="filt" viewBox="0 0 18 18"><path d="M.5 2h17l-6 7.500V16L7 17.500v-8z" fill="#5f93cc" stroke="#3a6ca3" stroke-width=".8"/><rect x=".5" y=".5" width="17" height="2.600" fill="#fce94f" stroke="#c4a000" stroke-width=".6"/></symbol>
<symbol id="treeup" viewBox="0 0 18 18"><path d="M2 1v15h5M2 6h4M0 1.500h17" fill="none" stroke="#999"/><rect x="5" y="4.500" width="4" height="4" fill="#f39b2d"/><rect x="5" y="12.500" width="4" height="4" fill="#f39b2d"/><path d="M13 0l5 6h-3v10h-4V6H8z" fill="#4e80b8" stroke="#2f5686" stroke-width=".8"/></symbol>
<symbol id="treedn" viewBox="0 0 18 18"><path d="M2 1v15h5M2 6h4M0 1.500h17" fill="none" stroke="#999"/><rect x="5" y="4.500" width="4" height="4" fill="#f39b2d"/><rect x="5" y="12.500" width="4" height="4" fill="#f39b2d"/><path d="M13 17.500l5-6h-3v-10h-4v10H8z" fill="#4e80b8" stroke="#2f5686" stroke-width=".8"/></symbol>
<symbol id="info" viewBox="0 0 18 18"><circle cx="9" cy="9" r="8.300" fill="#5b8ec9" stroke="#3e6da5"/><text x="9" y="14" font-size="14" font-style="italic" text-anchor="middle" font-family="Liberation Serif" fill="#fff">i</text></symbol>
<symbol id="brush" viewBox="0 0 24 24"><path d="M4 1c4 2 6 1 9 2l-1 7-9-2z" fill="#fce94f"/><path d="M3 7l9 3-3 7-8-2z" fill="#6a9bd8"/><path d="M1 14l8 2 4 7-13-3z" fill="#ee2b2b"/><path d="M22 .8c2 0 2 2 1 3l-6 7.200-3-3 7-6.700z" fill="#e0982f" stroke="#9a6416" stroke-width=".7"/><path d="M12 8l7 7-6 8-7-7z" fill="#d9a95a" stroke="#9a6416" stroke-width=".8"/><path d="M9.500 13l6 6M14 13l-5 6M16 15l-5 6" stroke="#9a6416" stroke-width=".7"/></symbol>
<symbol id="group" viewBox="0 0 18 18"><path d="M5 3h8v10H5zM1 7v9h9" fill="none" stroke="#8b8b86" stroke-width="1.400"/><path d="M7 2V0h3v10H8V4" fill="none" stroke="#4e80b8" stroke-width="1.200"/><rect x="10.500" y="11" width="7" height="7" rx="1.500" fill="#4f8a54"/><path d="M14 12.500v4M12 14.500h4" stroke="#fff" stroke-width="1.300"/></symbol>
<symbol id="eye" viewBox="0 0 20 14"><path d="M.5 7c5-7 14-7 19 0-5 7-14 7-19 0z" fill="#fff" stroke="#8a8a8a"/><circle cx="10" cy="7" r="4" fill="#5b8ec9" stroke="#31577f"/><circle cx="10" cy="7" r="1.700" fill="#111"/><path d="M2 3c5-4 11-4 16 0" fill="none" stroke="#999"/></symbol>
<symbol id="eps" viewBox="0 0 18 18"><text x="0" y="11" font-size="20" font-family="Liberation Serif" fill="#999">ε</text><path d="M10 8h7v9h-3v-4h-2v4h-2z" fill="#ddd" stroke="#bbb"/></symbol>
<symbol id="rem" viewBox="0 0 18 18"><rect x="1" y="1" width="14" height="13" fill="#fafafa" stroke="#8b8b86" stroke-width="1.300"/><rect x="10" y="11" width="8" height="7" rx="2" fill="#e0303c"/><path d="M11.500 14.500h5" stroke="#fff" stroke-width="1.500"/></symbol>
<symbol id="dock" viewBox="0 0 14 14"><rect x=".7" y=".7" width="12.600" height="12.600" rx="2" fill="#f4f4f4" stroke="#777" stroke-width="1.300"/><path d="M5.500 5V3.500h5v5H9M3.500 5.500h5v5h-5z" fill="none" stroke="#555"/></symbol>
<symbol id="close" viewBox="0 0 14 14"><rect x=".7" y=".7" width="12.600" height="12.600" rx="2" fill="#f4f4f4" stroke="#777" stroke-width="1.300"/><path d="M4 4l6 6M10 4l-6 6" stroke="#444" stroke-width="2.200"/></symbol>
<symbol id="sear" viewBox="0 0 16 16"><circle cx="6" cy="6" r="5" fill="none" stroke="#888" stroke-width="1.300"/><path d="M10 10l5 5" stroke="#888" stroke-width="1.800"/></symbol>
<symbol id="ramp" viewBox="0 0 16 16"><rect x="1" y="1" width="14" height="14" fill="url(#spec)" stroke="#555" stroke-width="1.500"/></symbol>
<symbol id="s1" viewBox="0 0 36 32"><rect x="2" y="2" width="33" height="21" fill="url(#sea)"/><path d="M8 5h8l3 4-4 4v5l-3 2-2-6-4-4zM19 6l5-2 8 1 1 5-4 1-1 3-3-3-2 1 1 5-2 3-3-7-1-4zM30 17h4v3h-4z" fill="#8795ab"/><path d="M.5 1h4v22h-4z" fill="#eee" stroke="#bbb"/><path d="M1 26.500h34" stroke="#222" stroke-width="2.500" stroke-dasharray="2 1"/><path d="M0 31h36" stroke="#ddd" stroke-width="1.800"/><rect x="4" y="24" width="3" height="5" fill="#3f6fb5"/></symbol>
<symbol id="s2" viewBox="0 0 36 26"><rect x="3" y="3" width="32" height="22" fill="#f3f3f3" stroke="#bbb"/><path d="M.5 1h4v24h-4z" fill="#fff" stroke="#bbb"/><path d="M8 5v18h26" fill="none" stroke="#333" stroke-width="1.300"/><path d="M9 17l4-7 9 8 6-6 5 6" fill="none" stroke="#4a72a5"/></symbol>
<symbol id="s3" viewBox="0 0 34 30"><rect x="1.500" y="1.500" width="31" height="27" fill="#f2f6fb" stroke="#7fa8cf" stroke-width="1.500"/><rect x="2" y="2" width="30" height="8" fill="#b9d8f5"/><path d="M6 5.500h7M17 5.500h12M6 14h8M17 14h12M6 18h8M17 18h12M6 22h8M17 22h12M6 26h8M17 26h12" stroke="#5b8ec9" stroke-width="1.600"/></symbol>
<symbol id="s4" viewBox="0 0 38 28"><path d="M9 4c9-7 18 0 28-2v24c-11 3-20-6-36-3z" fill="#a9a9a9" stroke="#8a8a8a"/><path d="M12 5l8-2-4 8-8 3zM24 4l10-1-9 9-6-1zM19 14l7 1-6 9-6-3zM6 17l5-2-3 6-5 0z" fill="#f0f0f0"/><path d="M7 13c9-5 18 4 29-1M4 20c9-4 20 3 32 0M20 3l-8 20M31 3L21 24" fill="none" stroke="#777" stroke-width=".8"/></symbol>
<symbol id="s5" viewBox="0 0 36 38"><path d="M7 8v18M29 8v18M18 10v22" stroke="#c98a2a" stroke-width="4"/><path d="M2 24h12M22 24h12" stroke="#c98a2a" stroke-width="3"/><rect x="10" y="1" width="16" height="11" fill="#e8474a" stroke="#c22"/><path d="M13 2v8M17 2v8M21 2v8" stroke="#f08a8c"/><rect x="1" y="26" width="15" height="11" fill="#fce04f" stroke="#c4a000"/><rect x="20" y="26" width="15" height="11" fill="#7fb0e6" stroke="#4a7cb5"/></symbol>
<symbol id="s6" viewBox="0 0 32 32"><path d="M12 0l8 7-7 7v-4C8 10 7 14 8 18 2 16 0 4 12 4z" fill="#7fb685" stroke="#3f7c4a"/><path d="M19 12l-7 8 7 7v-4c7-1 7 4 3 6v3c9-1 12-15-3-15z" fill="#e07b39" stroke="#b0551c"/></symbol>
<symbol id="bksp" viewBox="0 0 17 13"><path d="M4.500 0H17v13H4.500L0 6.500z" fill="#8a8a8a"/><path d="M7 3.500l6 6M13 3.500l-6 6" stroke="#fff" stroke-width="1.600"/></symbol>
<symbol id="plus" viewBox="0 0 18 18"><path d="M6.500 1h5v5.500H17v5h-5.500V17h-5v-5.500H1v-5h5.500z" fill="#fff" stroke="#3f7c4a" stroke-width="1.400"/><path d="M9 3.500v11M3.500 9h11" stroke="#5fa668" stroke-width="2"/></symbol>
<symbol id="minus" viewBox="0 0 18 18"><rect x="1" y="5.500" width="16" height="7" fill="#fff" stroke="#e0555c" stroke-width="1.300"/><rect x="3.500" y="8" width="11" height="2.200" fill="#e0555c"/></symbol>
<symbol id="swap" viewBox="0 0 20 20"><g fill="#86b98c" stroke="#5a9563" stroke-width=".6"><path d="M9 5l5-4v2.500c5 .5 7 6 3 10-.5-3-1-4.500-3-4.500v2.500z"/><path d="M11 15l-5 4v-2.500c-5-.5-7-6-3-10 .5 3 1 4.500 3 4.500V8.500z"/></g></symbol>
<symbol id="savep" viewBox="0 0 24 24"><use href="#save"/><rect x="14" y="14" width="10" height="10" fill="#3f7c4a"/><path d="M16 22l5-5" stroke="#fff" stroke-width="2"/></symbol>
<symbol id="lock" viewBox="0 0 16 20"><path d="M3.500 10V6c0-6 9-6 9 0v4" fill="none" stroke="#777" stroke-width="1.800"/><rect x=".5" y="9" width="15" height="10.500" rx="1" fill="#505050"/></symbol>
<symbol id="wgl" viewBox="0 0 20 18"><circle cx="10" cy="8.500" r="7.500" fill="#c9c9c9" stroke="#444"/><path d="M10 1v15M.5 8.500h19M4 5h12M4 12h12M10 1C4 4 4 12.500 10 16M10 1c6 3 6 11.500 0 15M7 17.500h6" fill="none" stroke="#444"/></symbol>
<symbol id="msg" viewBox="0 0 20 20"><path d="M10 .5c12 0 12 14 5 15.500l3 4c-4 0-6-1.500-7.500-3.500C-3 17-3 .5 10 .5z" fill="#555"/><g fill="#fff"><circle cx="5.500" cy="8.500" r="1.300"/><circle cx="10" cy="8.500" r="1.300"/><circle cx="14.500" cy="8.500" r="1.300"/></g></symbol>
<symbol id="mouse" viewBox="0 0 20 20"><path d="M2 13L18 1M1 10l5 5" stroke="#222" stroke-dasharray="2 1.500"/><g transform="rotate(-28 9 8)"><rect x="5" y="1" width="9" height="15" rx="4" fill="#fff" stroke="#111" stroke-width="1.500"/><path d="M8 2v7M11 2v7" stroke="#111" stroke-width="2"/></g><circle cx="12" cy="14" r="5" fill="#fff" stroke="#111" stroke-width="1.500"/><circle cx="11.500" cy="14" r="1.800" fill="none" stroke="#111" stroke-width="1.300"/></symbol>
</svg>

<div class="titlebar"><svg class="logo"><use href="#q"/></svg><span class="wt">*LESSON_3 — QGIS [JuanGuerrero]</span>
<svg class="winbtns" viewBox="0 0 140 20"><path d="M1 10h12" stroke="#111" stroke-width="1.200"/><path d="M58.500 7.500h9v9h-9zM61 7V5h9.500v9.500H68" fill="none" stroke="#111" stroke-width="1.200"/><path d="M119 4.500l11.500 11.500M130.500 4.500L119 16" stroke="#111" stroke-width="1.200"/></svg></div>
<nav class="menu"><span style="--w:61px">Pro<u>j</u>ect</span><span style="--w:44px"><u>E</u>dit</span><span style="--w:51px"><u>V</u>iew</span><span style="--w:53px"><u>L</u>ayer</span><span style="--w:71px"><u>S</u>ettings</span><span style="--w:66px"><u>P</u>lugins</span><span style="--w:60px">Vect<u>o</u>r</span><span style="--w:59px"><u>R</u>aster</span><span style="--w:80px"><u>D</u>atabase</span><span style="--w:49px"><u>W</u>eb</span><span style="--w:53px"><u>M</u>esh</span><span style="--w:88px">Pro<u>c</u>essing</span><span style="--w:50px"><u>H</u>elp</span></nav>

<div class="tb"><i class="h first"></i><svg class="b"><use href="#new"/></svg><svg class="b"><use href="#open"/></svg><svg class="b"><use href="#save"/></svg><svg class="b"><use href="#layout"/></svg><svg class="b"><use href="#lmgr"/></svg><svg class="b"><use href="#style"/></svg><i class="h"></i><svg class="b on"><use href="#hand"/></svg><svg class="b"><use href="#pan"/></svg><svg class="b"><use href="#zin"/></svg><svg class="b"><use href="#zout"/></svg><svg class="b"><use href="#zfull"/></svg><svg class="b"><use href="#zsel"/></svg><svg class="b"><use href="#zlay"/></svg><svg class="b"><use href="#z11"/></svg><svg class="b"><use href="#zlast"/></svg><svg class="b off"><use href="#znext"/></svg><svg class="b"><use href="#nmap"/></svg><svg class="b"><use href="#n3d"/></svg><svg class="b"><use href="#nbook"/></svg><svg class="b"><use href="#books"/></svg><svg class="b"><use href="#clock"/></svg><svg class="b"><use href="#refresh"/></svg><i class="h"></i><svg class="b off"><use href="#select"/></svg><i class="a off"></i><svg class="b off"><use href="#form"/></svg><i class="a off"></i><svg class="b"><use href="#desel"/></svg><i class="a"></i><svg class="b"><use href="#selloc"/></svg><i class="a"></i><i class="h"></i><svg class="b"><use href="#ident"/></svg><svg class="b off"><use href="#abacus"/></svg><svg class="b"><use href="#gear"/></svg><svg class="b"><use href="#sigma"/></svg><svg class="b off"><use href="#table"/></svg><i class="a off"></i><svg class="b"><use href="#ruler"/></svg><i class="a"></i><svg class="b"><use href="#tip"/></svg><svg class="b off"><use href="#act"/></svg><i class="a off"></i></div>

<div class="tb"><i class="h first"></i><svg class="b"><use href="#dsm"/></svg><svg class="b"><use href="#gpkg"/></svg><svg class="b"><use href="#shp"/></svg><svg class="b"><use href="#feather"/></svg><svg class="b"><use href="#chip"/></svg><svg class="b"><use href="#mesh"/></svg><svg class="b"><use href="#virt"/></svg><i class="h"></i><span class="m off"><svg class="b"><use href="#pen3"/></svg></span><svg class="b off"><use href="#pen"/></svg><svg class="b off"><use href="#savee"/></svg><svg class="b off"><use href="#line"/></svg><i class="a off"></i><svg class="b off"><use href="#pts"/></svg><svg class="b off"><use href="#node"/></svg><i class="a off"></i><svg class="b off"><use href="#rows"/></svg><svg class="b off"><use href="#trash"/></svg><svg class="b off"><use href="#cut"/></svg><svg class="b off"><use href="#copy"/></svg><svg class="b off"><use href="#paste"/></svg><svg class="b off"><use href="#undo"/></svg><svg class="b off"><use href="#redo"/></svg><i class="h"></i><svg class="b off"><use href="#abc"/></svg><svg class="b off"><use href="#pie"/></svg><i class="sep"></i><svg class="b"><use href="#abpin"/></svg><svg class="b"><use href="#abred"/></svg><i class="sep"></i><svg class="b off"><use href="#abpin2"/></svg><svg class="b off"><use href="#abeye"/></svg><svg class="b off"><use href="#abmove"/></svg><svg class="b off"><use href="#abrot"/></svg><svg class="b off"><use href="#abed"/></svg><i class="h"></i><svg class="b"><use href="#meta"/></svg><svg class="b"><use href="#gadd"/></svg><svg class="b"><use href="#gsea"/></svg><i class="h"></i><svg class="b"><use href="#py"/></svg><i class="h"></i><svg class="b"><use href="#help"/></svg><i class="h"></i></div>

<div class="tb faint"><i class="h first"></i><svg class="b off"><use href="#tri"/></svg><svg class="b off"><use href="#ptsm"/></svg><i class="a off"></i><svg class="b off"><use href="#b1"/></svg><svg class="b off"><use href="#b2"/></svg><svg class="b off"><use href="#b3"/></svg><svg class="b off"><use href="#b4"/></svg><svg class="b off"><use href="#b5"/></svg><svg class="b off"><use href="#b6"/></svg><svg class="b off"><use href="#b7"/></svg><svg class="b off"><use href="#b8"/></svg><svg class="b off"><use href="#b9"/></svg><svg class="b off"><use href="#b10"/></svg><svg class="b off"><use href="#b11"/></svg><svg class="b off"><use href="#b12"/></svg><svg class="b off"><use href="#b13"/></svg><svg class="b off"><use href="#b13"/></svg><svg class="b off"><use href="#b14"/></svg><svg class="b off"><use href="#b15"/></svg><svg class="b off"><use href="#b16"/></svg><i class="a off"></i><i class="h"></i><svg class="b"><use href="#magnet"/></svg><span class="m off"><svg class="b"><use href="#verts"/></svg></span><span class="m dis"><svg class="b on"><use href="#snap"/></svg></span><span class="spin dim tol"><span>12</span><i class="ud"></i></span><span class="combo dim unit">px</span><svg class="b"><use href="#topo"/></svg><span class="m"><svg class="b"><use href="#self"/></svg></span><svg class="b off"><use href="#xx"/></svg><svg class="b off"><use href="#bolt"/></svg><i class="a off"></i><svg class="b off"><use href="#trace"/></svg></div>

<main>
<aside class="left">
 <header class="dh"><span>Browser</span><svg><use href="#dock"/></svg><svg><use href="#close"/></svg></header>
 <div class="bt"><svg><use href="#addl"/></svg><svg><use href="#refresh"/></svg><svg><use href="#filt"/></svg><svg><use href="#treeup"/></svg><svg><use href="#info"/></svg></div>
 <div class="tree browser"><div class="rows">
  <div class="r" style="--d:0"><i class="dn"></i><svg class="big"><use href="#star"/></svg>Favorites</div>
  <div class="r" style="--d:1"><i class="dn"></i><svg><use href="#fold"/></svg><span class="path">C:\Users\Juan\QGIS\QGIS_LESSON_3</span></div>
  <div class="r" style="--d:2"><i class="dn"></i><svg><use href="#fold"/></svg>Course data Lesson 3-20250930</div>
  <div class="r sel" style="--d:3"><i></i><svg><use href="#tif"/></svg>buildg.tif</div>
  <div class="r" style="--d:3"><i></i><svg><use href="#tif"/></svg>dtm.tif</div>
  <div class="r" style="--d:3"><i></i><svg><use href="#tif"/></svg>gwlevel.tif</div>
  <div class="r" style="--d:3"><i></i><svg><use href="#tif"/></svg>roads.tif</div>
  <div class="r" style="--d:2"><i></i><svg><use href="#tif"/></svg>houses.tif</div>
  <div class="r" style="--d:2"><i></i><svg><use href="#tif"/></svg>houses150m.tif</div>
  <div class="r" style="--d:2"><i></i><svg><use href="#tif"/></svg>industry.tif</div>
  <div class="r" style="--d:2"><i></i><svg><use href="#tif"/></svg>industry2.tif</div>
  <div class="r" style="--d:2"><i></i><svg><use href="#tif"/></svg>isroad.tif</div>
  <div class="r" style="--d:2"><i class="rt"></i><svg class="big"><use href="#q"/></svg>LESSON_3</div>
  <div class="r" style="--d:2"><i></i><svg><use href="#tif"/></svg>roads.tif</div>
 </div><div class="sb"><i class="up"></i><i class="thumb" style="height:100px"></i><i class="groove"></i><i class="down"></i></div></div>
 <div class="split"></div>
 <header class="dh lay"><span>Layers</span><svg><use href="#dock"/></svg><svg><use href="#close"/></svg></header>
 <div class="lt"><span class="press"><svg><use href="#brush"/></svg></span><svg><use href="#group"/></svg><span class="m eye"><svg><use href="#eye"/></svg></span><span class="m fl"><svg><use href="#filt"/></svg></span><svg class="ep"><use href="#eps"/></svg><i class="a off"></i><svg><use href="#treedn"/></svg><svg><use href="#treeup"/></svg><svg><use href="#rem"/></svg></div>
 <div class="tree layers"><div class="rows">
  <div class="l g"><i class="rt"></i><b></b><svg><use href="#tif"/></svg><em>gwlevel</em></div>
  <div class="l g"><i class="rt"></i><b></b><svg><use href="#tif"/></svg><em>houses</em></div>
  <div class="l g"><i class="dn"></i><b></b><svg><use href="#tif"/></svg><em>roads150m</em></div>
  <div class="l band">Band 1 (Gray)</div>
  <div class="l sw"><i class="c" style="background:#de2d2d"></i>&gt;150 meters from Roads</div>
  <div class="l sw"><i class="c" style="background:#0fdf38"></i>&lt;= 150 meters from Roads</div>
  <div class="l g"><i class="rt"></i><b></b><svg><use href="#tif"/></svg><em>houses150m</em></div>
  <div class="l g"><i class="rt"></i><b></b><svg><use href="#tif"/></svg><em>isroad</em></div>
  <div class="l k sel"><i class="rt"></i><b class="ck"></b><svg><use href="#tif"/></svg><em class="cur">inddist</em></div>
  <div class="l g"><i class="rt"></i><b></b><svg><use href="#tif"/></svg><em>roads</em></div>
  <div class="l g"><i class="rt"></i><b></b><svg><use href="#tif"/></svg><em>industry2</em></div>
  <div class="l k"><i class="dn"></i><b class="ck"></b><svg><use href="#tif"/></svg><em>industry</em></div>
  <div class="l band">Band 1 (Gray)</div>
  <div class="l sw"><i class="c" style="background:#7fdd82"></i>No Industry</div>
  <div class="l sw"><i class="c" style="background:#c35c0c"></i>Industry</div>
 </div><div class="sb"><i class="up"></i><i class="groove" style="height:6px"></i><i class="thumb" style="height:251px"></i><i class="groove"></i><i class="down"></i></div></div>
</aside>
<div class="grip"></div>
<section class="canvas"><canvas id="raster" width="60" height="59"></canvas></section>
<div class="grip2"></div>
<aside class="right">
 <header class="dh"><span>Layer Styling</span><svg><use href="#dock"/></svg><svg><use href="#close"/></svg></header>
 <div class="combo lyr"><svg><use href="#tif"/></svg>inddist</div>
 <div class="body">
  <div class="side"><svg class="br"><use href="#brush"/></svg><div class="dark"><svg style="height:32px"><use href="#s1"/></svg><svg style="height:26px"><use href="#s2"/></svg><svg style="height:30px"><use href="#s3"/></svg><svg style="height:28px"><use href="#s4"/></svg><svg style="height:38px"><use href="#s5"/></svg><svg style="height:32px"><use href="#s6"/></svg></div></div>
  <div class="content">
   <div class="scroll"><div class="form">
    <div class="combo rend"><svg><use href="#ramp"/></svg>Singleband pseudocolor</div>
    <div class="f f1"><label>Band</label><span class="combo">Band 1 (Gray)</span></div>
    <div class="f f2"><label>Min</label><span class="in">0</span><label class="mx">Max</label><span class="in">255</span></div>
    <div class="f f3"><i class="rt"></i>Min / Max Value Settings</div>
    <div class="f f4"><label>Interpolation</label><span class="combo">Linear</span></div>
    <div class="f f5"><label>Color ramp</label><span class="in rb"><i></i></span><span class="dd"></span></div>
    <div class="f f6"><label>Label unit suffix</label><span class="in"></span></div>
    <div class="f f7"><label>Label precision</label><span class="spin"><span>0</span><svg><use href="#bksp"/></svg><i class="ud lo"></i></span></div>
    <div class="tbl"><div class="tm"><div class="th"><span>Value</span><span>Color</span><span>Label</span></div>
     <div class="tr"><span>0</span><i style="background:#d7191c"></i><span>0</span></div>
     <div class="tr"><span>64</span><i style="background:#fdae61"></i><span>64</span></div>
     <div class="tr"><span>128</span><i style="background:#ffffbf"></i><span>128</span></div>
     <div class="tr"><span>191</span><i style="background:#abdda4"></i><span>191</span></div></div>
     <div class="sb"><i class="up"></i><i class="thumb" style="height:121px"></i><i class="groove"></i><i class="down"></i></div></div>
    <div class="f f8"><label>Mode</label><span class="combo">Continuous</span><label class="cl">Classes</label><span class="spin dim"><span>5</span><i class="ud"></i></span></div>
    <div class="f f9"><span class="btn w100">Classify</span><span class="btn ic"><svg><use href="#plus"/></svg></span><span class="btn ic"><svg><use href="#minus"/></svg></span><span class="btn ic"><svg><use href="#swap"/></svg></span><span class="btn ic"><svg><use href="#open"/></svg></span><span class="btn ic"><svg><use href="#savep"/></svg></span><span class="btn leg">Legend Settings...</span></div>
    <div class="f f10"><b></b>Clip out of range values</div>
   </div><div class="sb"><i class="up"></i><i class="thumb" style="height:318px"></i><i class="groove"></i><i class="down"></i></div></div>
   <div class="foot"><span class="btn sq"><svg><use href="#undo"/></svg></span><span class="btn sq"><svg><use href="#redo"/></svg></span><b class="ck"></b><span class="lu">Live update</span><span class="btn ap">Apply</span></div>
  </div>
 </div>
 <div class="tabs"><span class="t1">Layer Styling</span><span class="t2">Processing Toolbox</span></div>
</aside>
</main>
<footer class="status"><span class="in loc"><svg><use href="#sear"/></svg>Type to locate (Ctrl+K)</span><span class="s1">Coordinate</span><span class="in co">288396, 3352968</span><svg class="mo"><use href="#mouse"/></svg><span class="s2">Scale</span><span class="in sc"><span>1:19049</span><i class="dd"></i></span><svg class="lk"><use href="#lock"/></svg><span class="s3">Magnifier</span><span class="spin mg"><span>250%</span><svg><use href="#bksp"/></svg><i class="ud"></i></span><span class="s4">Rotation</span><span class="spin ro"><span>0.0 °</span><i class="ud"></i></span><b class="ck"></b><span class="s5">Render</span><svg class="wg"><use href="#wgl"/></svg><span class="s6">EPSG:32630</span><svg class="ms"><use href="#msg"/></svg></footer>
<script src="raster.js"></script>
</body>
</html>
```
FILE: styles.css
```css
* { box-sizing: border-box; }
body { margin: 0; width: 1919px; height: 1020px; overflow: hidden; background: #efefef; color: #000; font: 13px/16px "Open Sans", "Noto Sans", sans-serif; display: flex; flex-direction: column; white-space: nowrap; }
i { font-style: normal; flex: none; }
svg { flex: none; display: block; }
.sprite { position: absolute; width: 0; height: 0; }
u { text-underline-offset: 2px; }

.titlebar { height: 29px; flex: none; display: flex; align-items: center; background: linear-gradient(90deg, #f0eff7, #f9edf5 12%, #f8eef2); padding-left: 2px; }
.logo { width: 21px; height: 21px; }
.wt { margin-left: 6px; font-size: 14.500px; letter-spacing: -.15px; }
.winbtns { width: 140px; height: 20px; margin: 0 15px 2px auto; }
.menu { height: 26px; flex: none; display: flex; align-items: center; border-bottom: 2px solid #d6d6d6; padding-left: 5px; font-size: 14.300px; letter-spacing: -.3px; }
.menu span { width: var(--w); text-align: center; padding-top: 1px; }

.tb { height: 49px; flex: none; display: flex; align-items: center; background: linear-gradient(#fbfbfb, #efefef); border-bottom: 2px solid #b5b5b5; }
.tb.faint { border-bottom-width: 1px; }
.b { width: 41.25px; height: 30px; overflow: visible; }
.b.on { width: 40px; height: 39px; padding: 4px 0; margin-right: 1.250px; border: 1px solid #b0b0b0; border-radius: 3px; background: #dcdcdc; }
.off { opacity: .36; filter: grayscale(.5); }
.faint .b.off { opacity: .42; }
.a.off { opacity: .55; }
.h { width: 20px; height: 22px; background: radial-gradient(circle, #a8a8a8 .9px, transparent 1.100px) 9px 0 / 4px 4px; background-clip: content-box; padding: 0 3px 0 9px; }
.h.first { width: 15.500px; padding: 0 3px 0 5px; background-position: 5px 0; }
.sep { width: 8px; height: 30px; border-left: 1px solid #c9c9c9; margin-left: 4px; margin-right: -4px; }
.a { width: 15px; display: flex; justify-content: center; }
.a::before, .m::after { content: ""; border: 5px solid transparent; border-top: 6px solid #4a4a4a; border-bottom: 0; }
.m { position: relative; }
.m::after { position: absolute; right: 3px; bottom: -3px; border-width: 4px; border-top-width: 4px; border-bottom: 0; }
.m.dis::after { bottom: 3px; opacity: .5; }
.dis .b.on { background: #d8d8d8; }

.combo, .in, .spin, .btn { border: 1px solid #acacac; border-radius: 3px; display: flex; align-items: center; flex: none; }
.combo { background: linear-gradient(#fdfdfd, #ececec); padding: 0 13px 0 5px; }
.combo::after, .dd::after { content: ""; margin-left: auto; border: 5px solid transparent; border-top: 6px solid #4a4a4a; border-bottom: 0; }
.in { background: #fff; padding-left: 3px; }
.spin { background: #fff; padding-left: 6px; }
.spin > span { flex: 1; }
.btn { background: linear-gradient(#fefefe, #ededed); justify-content: center; }
.dim { background: #f0f0f0; color: #7c7c7c; }
.dim::after, .dim .ud::before, .dim .ud::after { opacity: .55; }
.ud { width: 17px; align-self: stretch; border-left: 1px solid #acacac; display: flex; flex-direction: column; align-items: center; justify-content: center; gap: 4px; }
.ud::before, .ud::after { content: ""; border: 4.500px solid transparent; border-bottom: 6px solid #4a4a4a; border-top: 0; }
.ud::after { border: 4.500px solid transparent; border-top: 6px solid #4a4a4a; border-bottom: 0; }
.ud.lo::before { opacity: .5; }
.tol { width: 100px; height: 26px; margin-left: 1px; }
.unit { width: 104px; height: 27px; margin: 0 2px; padding-right: 8px; }

main { display: flex; height: 783px; flex: none; }
.left { width: 367px; display: flex; flex-direction: column; }
.dh { height: 25px; flex: none; display: flex; align-items: center; padding-left: 5px; font-size: 13.500px; }
.dh span { flex: 1; }
.dh svg { width: 15px; height: 15px; margin-left: 2.500px; margin-bottom: 2px; }
.left .dh svg:last-child { margin-right: 1px; }
.bt { height: 36px; flex: none; display: flex; align-items: center; gap: 13px; padding-left: 10px; padding-bottom: 2px; }
.bt svg { width: 18.500px; height: 18.500px; }
.tree { border: 1px solid #b6b6b6; background: #fff; display: flex; overflow: hidden; flex: none; }
.rows { flex: 1; overflow: hidden; }
.browser { height: 313px; }
.layers { height: 329px; border-top-color: #efefef; }
.r { height: 22.480px; display: flex; align-items: center; padding-left: calc(var(--d) * 20px); margin-right: 30px; font-size: 14px; padding-top: 1px; }
.rows .r:first-child { margin-top: 1px; }
.r svg { width: 18px; height: 18px; margin-right: 8.500px; margin-left: 6px; }
.r svg.big { width: 21px; height: 21px; margin: 0 7.500px 0 4px; }
.sel { background: #efefef; }
.r.sel { padding-left: 60px; }
.r > i, .l > i { width: 19px; display: flex; justify-content: center; }
.dn::before { content: ""; border: 5px solid transparent; border-top: 5.500px solid #5a5a5a; border-bottom: 0; }
.rt::before { content: ""; border: 5px solid transparent; border-left: 6px solid #5a5a5a; border-right: 0; }
.sb { width: 17px; flex: none; display: flex; flex-direction: column; border-left: 1px solid #ccc; background: #fff; }
.sb i { display: flex; justify-content: center; align-items: center; }
.sb .up, .sb .down { height: 17px; border-bottom: 1px solid #bbb; }
.sb .down { height: 18px; border: 0; border-top: 1px solid #bbb; }
.up::before { content: ""; border: 5px solid transparent; border-bottom: 5.500px solid #444; border-top: 0; }
.down::before { content: ""; border: 5px solid transparent; border-top: 5.500px solid #444; border-bottom: 0; }
.thumb { background: linear-gradient(90deg, #f1f1f1, #fff); }
.groove { flex: 1; background: #e3e3e3; border-top: 1px solid #b6b6b6; }
.groove[style] { flex: none; border-bottom: 1px solid #b6b6b6; }
.split { flex: none; background: radial-gradient(circle, #aaa .8px, transparent 1px) 0 0 / 4px 4px; width: 20px; margin-left: 174px; height: 4px; margin-top: 1px; margin-bottom: 3px; }
.dh.lay { height: 26px; }
.lt { height: 45px; flex: none; display: flex; align-items: center; padding-left: 5px; padding-bottom: 1px; }
.lt > svg, .lt .m svg { width: 18.500px; height: 18.500px; }
.press { width: 30px; height: 29px; border: 1px solid #b0b0b0; border-radius: 3px; background: #dcdcdc; display: flex; align-items: center; justify-content: center; margin-right: 7px; }
.press svg { width: 20px; height: 20px; }
.lt .eye { margin: 0 21px 0 18px; }
.lt .m::after { right: -9px; bottom: -4px; }
.lt .eye svg { width: 20px; }
.lt .ep { margin: 0 9px 0 23.500px; }
.lt .a { margin-right: 8px; }
.lt .a ~ svg { margin-right: 13px; }
.l { height: 22.500px; display: flex; align-items: center; font-size: 13.500px; padding-left: 3px; }
.layers .l:first-child { margin-top: -4px; }
.l b, .f10 b, .foot b, .status b { width: 17px; height: 17px; border: 1px solid #b3b3b3; background: #fff; margin-right: 10px; flex: none; }
.l b { margin-left: 7px; }
.l svg { width: 17px; height: 17px; margin-right: 9px; }
.l em { font-weight: 700; letter-spacing: -.1px; }
.g em { color: #808080; }
.k em { font-style: normal; }
.cur { text-decoration: underline; text-underline-offset: 3px; }
.l.band { height: 20px; padding-left: 54px; letter-spacing: .2px; }
.l.sw { padding-left: 54px; letter-spacing: .4px; }
.l.sw .c { width: 20px; height: 20px; margin-right: 8px; }
.ck::before { content: ""; display: block; width: 5px; height: 10px; margin: 0 0 0 5px; border: solid #000; border-width: 0 2px 2px 0; transform: rotate(35deg); }
.grip { width: 8px; background: radial-gradient(circle, #aaa .8px, transparent 1px) 3px 0 / 4px 4px content-box; background-repeat: repeat-y; padding: 382px 0; }
.canvas { width: 901px; background: #fff; border: 1px solid #bbb; border-top: 0; padding: 60px 0 0 70px; overflow: hidden; flex: none; }
#raster { display: block; width: 745px; height: 732.780px; image-rendering: pixelated; }
.grip2 { width: 9px; background: radial-gradient(circle, #aaa .8px, transparent 1px) 3px 0 / 4px 4px content-box; background-repeat: repeat-y; padding: 382px 0; }

.right { width: 634px; display: flex; flex-direction: column; font-size: 12.700px; letter-spacing: -.48px; }
.right .dh { font-size: 13.700px; height: 25px; margin-bottom: 2px; padding-left: 4px; padding-top: 1px; }
.right .dh svg { margin-bottom: 3px; }
.combo.lyr { height: 30px; margin: 0 3px 0 4px; padding-left: 8px; padding-right: 8px; }
.lyr svg { width: 17px; height: 17px; margin-right: 5px; }
.body { display: flex; height: 678px; margin-top: 15px; flex: none; padding-left: 4px; }
.side { width: 47px; }
.br { width: 37px; height: 33px; margin: 2px 0 8px 8px; }
.dark { height: 635px; background: #5e5e5e; display: flex; flex-direction: column; align-items: center; padding-top: 10px; }
.dark svg { width: 37px; margin-bottom: 18px; }
.dark svg:nth-child(2) { margin-bottom: 22px; }
.dark svg:nth-child(3) { margin-bottom: 22px; }
.dark svg:nth-child(5) { margin-bottom: 16px; }
.content { flex: 1; padding-left: 3px; }
.scroll { display: flex; height: 641px; }
.form { width: 560px; }
.scroll > .sb { border: 0; }
.rend { height: 30px; padding-left: 7px; padding-right: 8px; }
.rend svg { width: 17px; height: 17px; margin-right: 5px; }
.f { display: flex; align-items: center; padding: 0 4px; }
.f label { width: 188px; flex: none; }
.f1 { margin-top: 11px; height: 30px; }
.f1 label, .f2 label { width: 140px; }
.f1 .combo { flex: 1; height: 30px; padding-right: 8px; }
.f2 { margin-top: 8px; height: 27px; }
.f2 .in { width: 132px; height: 27px; }
.f2 .mx { padding-left: 8px; width: 148px; }
.in:not(.rb) { padding-top: 1px; }
.f3 { height: 24px; margin-top: 7px; font-weight: 700; letter-spacing: .1px; }
.f3 i { width: 22px; padding-left: 1px; margin-left: 4px; }
.f3 .rt::before { display: block; width: 0; border-width: 6.500px; border-left: 9px solid #333; border-right: 0; }
.f4 { margin-top: 7px; height: 27px; }
.f4 .combo, .f6 .in, .f7 .spin { flex: 1; height: 27px; padding-right: 8px; }
.f5 { margin-top: 8px; height: 27px; }
.rb { width: 348px; height: 27px; padding: 3px 4px 3px 5px; background: linear-gradient(#fdfdfd, #ececec); }
.rb i { flex: 1; height: 19px; background: linear-gradient(90deg, #d7191c, #fdae61 25%, #ffffbf 50%, #abdda4 75%, #2b83ba); }
.dd { width: 15px; height: 27px; margin-left: 1px; border: 1px solid #acacac; border-radius: 3px; background: linear-gradient(#fdfdfd, #ececec); display: flex; align-items: center; justify-content: center; }
.dd::after { margin: 0; }
.f6 { margin-top: 8px; height: 27px; }
.f7 { margin-top: 9px; height: 25px; }
.f7 .spin { height: 25px; padding-right: 0; }
.f7 .spin svg, .mg svg { width: 17px; height: 13px; margin-right: 12px; }
.tbl { margin: 10px 5px 0 4px; height: 238px; background: #fff; display: flex; overflow: hidden; }
.tm { flex: 1; overflow: hidden; }
.th { height: 25px; display: flex; align-items: center; background: linear-gradient(#fdfdfd, #ededed); border-bottom: 1px solid #b3b3b3; }
.th span { width: 74px; padding-left: 4px; height: 24px; line-height: 25px; border-right: 1px solid #ccc; }
.th span:first-child { width: 124px; padding-left: 3px; }
.th span:last-child { flex: 1; border: 0; }
.tr { height: 55px; display: flex; align-items: center; font-size: 13.500px; }
.tr span:first-child { width: 136px; padding-left: 30px; }
.tr i { width: 53px; height: 53px; border-radius: 7px; margin-right: 14px; }
.tr span:last-child { color: #a3a3a3; }
.tbl .sb { width: 18px; }
.f8 { margin-top: 8px; height: 27px; }
.f8 label { width: 37px; }
.f8 .combo { width: 113px; height: 28px; padding-right: 8px; }
.f8 .cl { margin-left: auto; width: 48px; }
.f8 .spin { width: 84px; height: 26px; }
.f9 { margin-top: 11px; height: 30px; }
.btn { height: 26px; }
.w100 { width: 100px; }
.ic { width: 35px; height: 30px; margin-left: 7.500px; }
.ic svg { width: 20px; height: 20px; }
.leg { width: 109px; margin-left: auto; }
.f10 { margin-top: 13px; height: 18px; letter-spacing: -.35px; }
.f10 b { margin: 0 6px 2px 0; }
.foot { display: flex; align-items: center; margin-top: 8px; height: 29px; padding-right: 3px; }
.sq { width: 30px; height: 29px; margin-right: 7px; }
.sq svg { width: 18px; height: 18px; }
.foot b { margin-left: auto; margin-right: 7px; }
.lu { width: 79px; }
.ap { width: 100px; color: #858585; }
.tabs { display: flex; height: 30px; margin-top: 4px; border-top: 1px solid #b3b3b3; }
.tabs span { text-align: center; height: 25px; line-height: 25px; border: 1px solid #b3b3b3; border-top: 0; background: #dcdcdc; width: 135px; }
.tabs .t1 { width: 102px; height: 28px; line-height: 27px; background: #f7f7f7; margin-top: -1px; }

.status { display: flex; align-items: center; height: 37px; flex: none; padding: 1px 0 3px 5px; letter-spacing: -.3px; }
.status .in { height: 27px; }
.status > span:not(.in):not(.spin) { flex: none; }
.loc { width: 250px; color: #8a8a8a; letter-spacing: 0; margin-right: 669px; }
.loc svg { width: 16px; height: 16px; margin: 0 9px 0 8px; }
.s1 { width: 70px; }
.co { width: 125px; padding-left: 7px; letter-spacing: -.1px; }
.mo { width: 20px; height: 20px; margin: 0 17px 0 6px; }
.s2 { width: 37px; }
.sc { width: 94px; }
.sc span { flex: 1; }
.sc .dd { width: 22px; height: 27px; margin: -1px; }
.lk { width: 16px; height: 20px; margin: 0 11px 0 16px; }
.s3 { width: 60px; }
.mg { width: 100px; height: 25px; }
.s4 { width: 74px; padding-left: 12px; }
.ro { width: 101px; height: 25px; }
.status b { margin: 0 6px 0 8px; }
.s5 { width: 61px; letter-spacing: -.15px; }
.wg { width: 20px; height: 18px; margin-right: 2px; }
.s6 { width: 104px; letter-spacing: -.1px; }
.ms { width: 20px; height: 20px; }
```
FILE: raster.js
```js
// Distance-to-industry raster: every cell takes its colour from the squared
// distance, in cells, to the nearest industry cell. Runs are [row, first, last].
const runs = [
  [1, 5, 8], [1, 12, 18], [2, 3, 8], [2, 12, 18], [3, 4, 8], [3, 12, 18],
  [4, 5, 19], [5, 8, 21], [6, 8, 20], [7, 11, 20], [8, 12, 16], [9, 15, 16],
  [12, 39, 40], [24, 21, 22], [25, 20, 23], [26, 20, 23], [27, 19, 20], [40, 16, 17]
];
const colours = {
  0: '#d7191c', 1: '#f58d53', 2: '#fdb56c', 4: '#fddb97', 5: '#feeaa6',
  8: '#eff8bc', 9: '#e1f3b6', 10: '#d7eeb3', 13: '#b9e3a9', 16: '#9bd3a7',
  17: '#8fcaa9', 18: '#84c0ab', 20: '#6aaeb2', 25: '#388bba'
};
const ctx = document.getElementById('raster').getContext('2d');
for (let y = 0; y < 59; y++) {
  for (let x = 0; x < 60; x++) {
    let best = 99;
    for (const [row, a, b] of runs) {
      const dx = x < a ? a - x : x > b ? x - b : 0;
      best = Math.min(best, dx * dx + (y - row) ** 2);
    }
    ctx.fillStyle = colours[best] || '#2b83ba';
    ctx.fillRect(x, y, 1, 1);
  }
}
```
